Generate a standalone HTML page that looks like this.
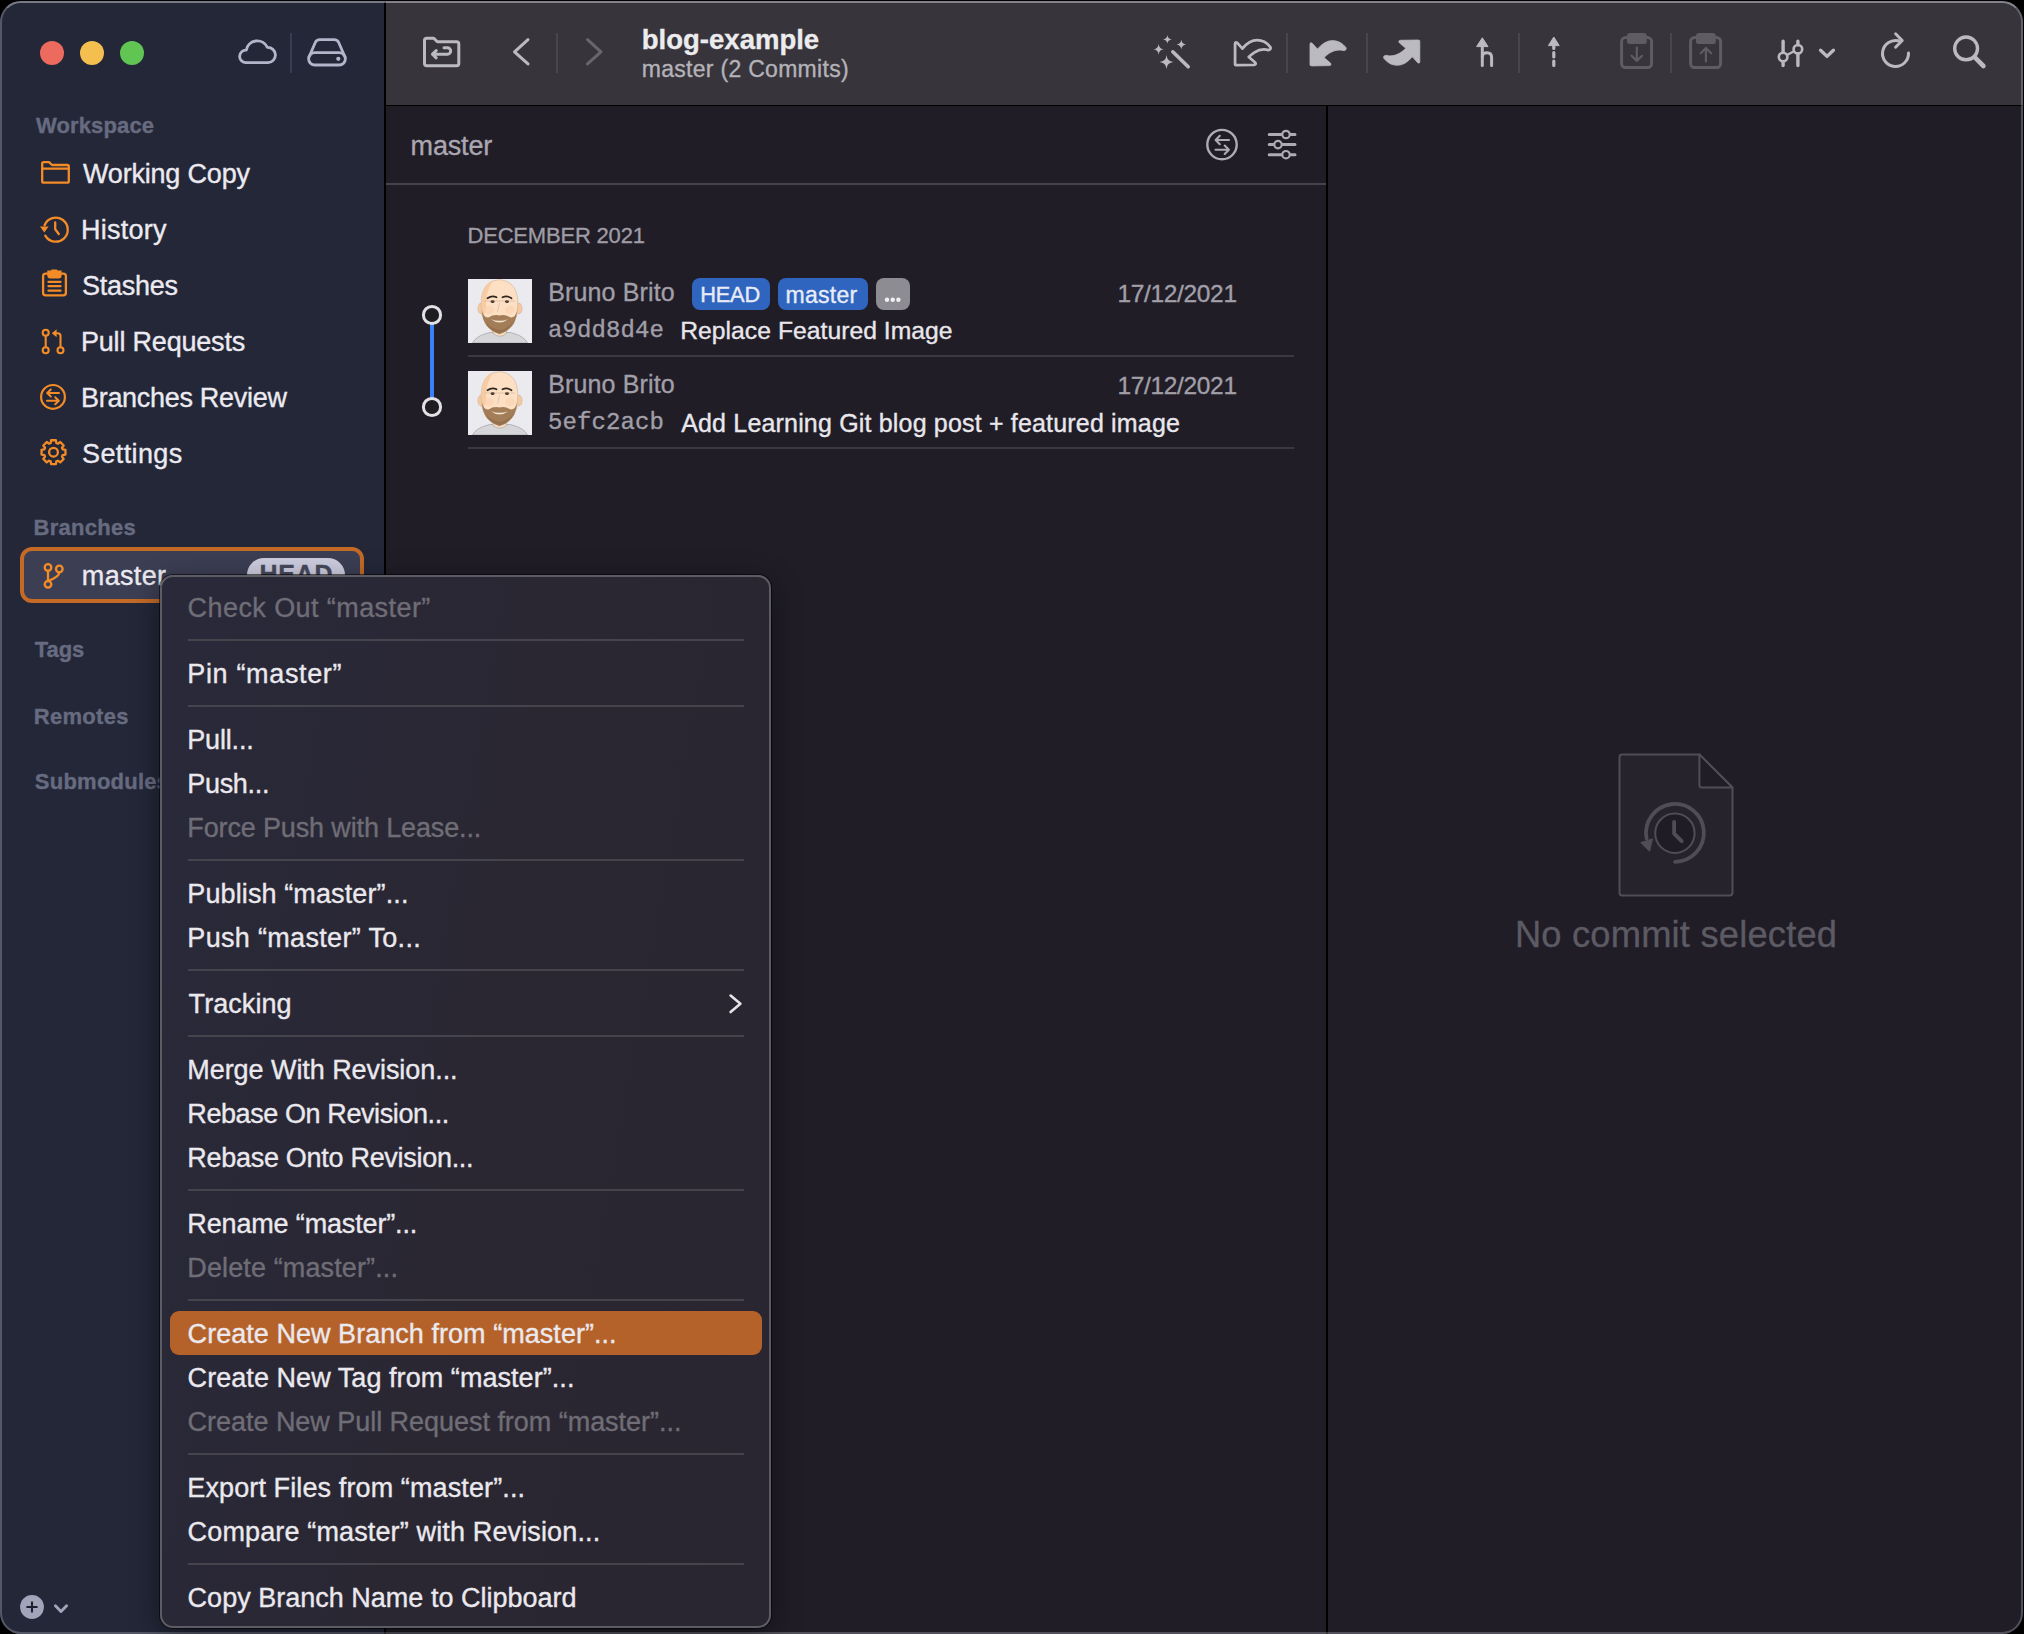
<!DOCTYPE html>
<html><head><meta charset="utf-8">
<style>
*{margin:0;padding:0;box-sizing:border-box}
html,body{width:2024px;height:1634px;overflow:hidden;background:#000}
body{position:relative;font-family:"Liberation Sans",sans-serif}
.t,.mi{-webkit-text-stroke:0.35px currentColor}
.win{position:absolute;left:0;top:1px;width:2023px;height:1633px;border-radius:21px;overflow:hidden;background:#201d27}
.side{position:absolute;left:0;top:0;width:384px;height:1633px;background:#232738}
.vdiv{position:absolute;left:384px;top:0;width:2px;height:1633px;background:#000}
.tool{position:absolute;left:386px;top:0;width:1637px;height:104px;background:#37343b}
.tline{position:absolute;left:386px;top:104px;width:1637px;height:1px;background:#000}
.rdiv{position:absolute;left:1326px;top:105px;width:2px;height:1528px;background:#000}
.frame{position:absolute;left:0;top:1px;width:2023px;height:1633px;border-radius:21px;border:2px solid rgba(220,220,230,.27);border-top-color:rgba(225,225,235,.45);pointer-events:none}
.t{position:absolute;white-space:nowrap;line-height:1;margin-top:1.8px}
.hdrline{position:absolute;left:386px;top:182px;width:940px;height:2px;background:#46434d}
.sep{position:absolute;height:2px;background:#3f3d47}
svg.ov{position:absolute;left:0;top:0}
.menu{position:absolute;left:160px;top:575px;width:611px;height:1053px;border-radius:13px;
 background:linear-gradient(100deg,#29293a 0%,#2a2732 55%,#2a2631 100%);
 border:2px solid #5d5b63;box-shadow:0 0 0 1px rgba(0,0,0,.55), 0 8px 30px rgba(0,0,0,.45)}
.mi{position:absolute;left:188px;margin-top:1px;font-size:27px;color:#ebe9ee;white-space:nowrap;line-height:1}
.mi.dis{color:#6f6d76}
.msep{position:absolute;left:188px;width:556px;height:2px;background:#45434c}
.hl{position:absolute;left:170px;top:1311px;width:592px;height:44px;border-radius:9px;background:#b5622a}
</style></head><body>
<div class="win">
 <div class="side"></div>
 <div class="vdiv"></div>
 <div class="tool"></div>
 <div class="tline"></div>
 <div class="hdrline"></div>
 <div class="rdiv"></div>
</div>

<!-- SIDEBAR TEXT -->

<div style="position:absolute;left:20px;top:547px;width:344px;height:56px;border-radius:12px;border:4px solid #c46a26;background:#3c3e54"></div>
<div style="position:absolute;left:247px;top:558px;width:98px;height:34px;border-radius:17px;background:#cdcde0;overflow:hidden"><div class="t" style="left:12.5px;top:2.7px;font-size:25px;font-weight:bold;letter-spacing:0.73px;color:#464a5e">HEAD</div></div>


<!-- TOOLBAR TEXT -->

<!-- LIST -->

<div class="sep" style="left:468px;top:355px;width:826px;background:#3a3842"></div>

<div class="sep" style="left:468px;top:447px;width:826px;background:#3a3842"></div>

<div style="position:absolute;left:692px;top:278px;width:78px;height:32px;border-radius:8px;background:#2f64bf"></div>
<div style="position:absolute;left:778px;top:278px;width:90px;height:32px;border-radius:8px;background:#2f64bf"></div>
<div style="position:absolute;left:876px;top:278px;width:34px;height:32px;border-radius:8px;background:#8d8c92"></div>
<svg class="ov" width="2024" height="400"><circle cx="887" cy="299.8" r="2.2" fill="#f0f0f2"/><circle cx="892.7" cy="299.8" r="2.2" fill="#f0f0f2"/><circle cx="898.4" cy="299.8" r="2.2" fill="#f0f0f2"/></svg>

<!-- RIGHT PANE -->

<!-- TEXT -->
<div class="t" style="left:36.0px;top:113.5px;font-size:22px;font-weight:bold;letter-spacing:0.125px;color:#676b80">Workspace</div>
<div class="t" style="left:83.0px;top:159.4px;font-size:27px;letter-spacing:-0.191px;color:#eceaf0">Working Copy</div>
<div class="t" style="left:81.0px;top:215.0px;font-size:27px;letter-spacing:0.250px;color:#eceaf0">History</div>
<div class="t" style="left:82.0px;top:271.1px;font-size:27px;letter-spacing:-0.267px;color:#eceaf0">Stashes</div>
<div class="t" style="left:81.0px;top:327.5px;font-size:27px;letter-spacing:-0.200px;color:#eceaf0">Pull Requests</div>
<div class="t" style="left:81.0px;top:383.3px;font-size:27px;letter-spacing:-0.300px;color:#eceaf0">Branches Review</div>
<div class="t" style="left:82.0px;top:439.3px;font-size:27px;letter-spacing:0.371px;color:#eceaf0">Settings</div>
<div class="t" style="left:33.6px;top:515.1px;font-size:22px;font-weight:bold;letter-spacing:0.257px;color:#676b80">Branches</div>
<div class="t" style="left:81.8px;top:561.4px;font-size:27px;letter-spacing:0.340px;color:#eceaf0">master</div>
<div class="t" style="left:34.8px;top:637.7px;font-size:22px;font-weight:bold;letter-spacing:-0.067px;color:#676b80">Tags</div>
<div class="t" style="left:33.8px;top:703.9px;font-size:22px;font-weight:bold;letter-spacing:0.283px;color:#676b80">Remotes</div>
<div class="t" style="left:34.8px;top:769.1px;font-size:22px;font-weight:bold;letter-spacing:0.250px;color:#676b80">Submodules</div>
<div class="t" style="left:641.8px;top:24.7px;font-size:27.5px;font-weight:bold;letter-spacing:0.009px;color:#ecebee">blog-example</div>
<div class="t" style="left:641.8px;top:56.1px;font-size:23px;letter-spacing:0.288px;color:#b4b2b8">master (2 Commits)</div>
<div class="t" style="left:410.6px;top:131.3px;font-size:27px;letter-spacing:-0.160px;color:#aaa7b1">master</div>
<div class="t" style="left:467.5px;top:223.7px;font-size:22px;letter-spacing:-0.192px;color:#9f9ca5">DECEMBER 2021</div>
<div class="t" style="left:548.3px;top:278.7px;font-size:25px;letter-spacing:0.130px;color:#a19fa7">Bruno Brito</div>
<div class="t" style="left:1117.4px;top:280.3px;font-size:24.5px;letter-spacing:-0.333px;color:#a19fa7">17/12/2021</div>
<div class="t" style="left:548.0px;top:317.7px;font-size:24px;font-family:'Liberation Mono',monospace;letter-spacing:0.100px;color:#a19fa7">a9dd8d4e</div>
<div class="t" style="left:680.2px;top:316.9px;font-size:24.7px;letter-spacing:0.033px;color:#e9e7ec">Replace Featured Image</div>
<div class="t" style="left:548.3px;top:370.7px;font-size:25px;letter-spacing:0.130px;color:#a19fa7">Bruno Brito</div>
<div class="t" style="left:1117.4px;top:372.2px;font-size:24.5px;letter-spacing:-0.333px;color:#a19fa7">17/12/2021</div>
<div class="t" style="left:548.0px;top:409.7px;font-size:24px;font-family:'Liberation Mono',monospace;letter-spacing:0.100px;color:#a19fa7">5efc2acb</div>
<div class="t" style="left:681.2px;top:408.8px;font-size:25px;letter-spacing:0.176px;color:#e9e7ec">Add Learning Git blog post + featured image</div>
<div class="t" style="left:700.2px;top:282.6px;font-size:21.8px;letter-spacing:-0.200px;color:#e8ecf6">HEAD</div>
<div class="t" style="left:785.6px;top:281.9px;font-size:23px;letter-spacing:0.260px;color:#e8ecf6">master</div>
<div class="t" style="left:1514.9px;top:915.1px;font-size:36.3px;letter-spacing:0.200px;color:#5c5a63">No commit selected</div>
<svg class="ov" width="2024" height="1634" viewBox="0 0 2024 1634">
 <defs>
 <symbol id="av" viewBox="0 0 64 64">
  <rect width="64" height="64" fill="#ebebef"/>
  <path d="M4.5,64 Q8,56.5 22,53.5 H42 Q56,56.5 59.5,64 Z" fill="#d6d6d9" stroke="#9ea1a8" stroke-width="0.7"/>
  <path d="M25,46 V54.5 Q31.7,60 38.5,54.5 V46 Z" fill="#f9dcc0" stroke="#9ea1a8" stroke-width="0.6"/>
  <ellipse cx="13" cy="29.5" rx="3.2" ry="5.4" fill="#f3c9a3" stroke="#c9a586" stroke-width="0.4"/>
  <ellipse cx="51" cy="29.5" rx="3.2" ry="5.4" fill="#f3c9a3" stroke="#c9a586" stroke-width="0.4"/>
  <path d="M13.2,26 Q12.5,2.5 31.5,0.6 Q50.5,2.5 49.8,26 Q50,50 31.5,55 Q13,50 13.2,26 Z" fill="#fde0c4" stroke="#c9a586" stroke-width="0.5"/>
  <path d="M25,1.3 Q13.5,5 13.3,26 Q14,34 15.5,38 L18,30 Q17,14 25,1.3 Z" fill="#f6c89e" opacity="0.85"/>
  <ellipse cx="21" cy="31" rx="5" ry="4" fill="#fad2b2" opacity="0.7"/>
  <ellipse cx="42" cy="31" rx="5" ry="4" fill="#fad2b2" opacity="0.7"/>
  <path d="M13.8,31 Q14.5,50 31.5,55 Q48.5,50 49.2,31 Q47.5,39 42.5,38.5 Q37,35 31.5,36.5 Q26,35 20.5,38.5 Q15.5,39 13.8,31 Z" fill="#a27d58"/>
  <path d="M17,42 Q22,52 31.5,54 Q41,52 46,42 Q40,50 31.5,51 Q23,50 17,42 Z" fill="#8f6b4a" opacity="0.7"/>
  <path d="M23,40.2 Q31.5,47 40,40.2 Q31.5,43.2 23,40.2 Z" fill="#f4e1cc"/>
  <path d="M19.5,19.3 Q24,16 28.5,18.3 M34.5,18.3 Q39,16 43.5,19.3" stroke="#2f2520" stroke-width="1.7" fill="none" stroke-linecap="round"/>
  <ellipse cx="24.6" cy="22.6" rx="2.1" ry="1.3" fill="#2f2520"/>
  <ellipse cx="39" cy="22.6" rx="2.1" ry="1.3" fill="#2f2520"/>
  <path d="M16.5,22 H47 M31.5,24 Q30,31 29.5,33" stroke="#c3a489" stroke-width="0.45" fill="none"/>
 </symbol>
 </defs>
 <use href="#av" x="468" y="279" width="64" height="64"/>
 <use href="#av" x="468" y="371" width="64" height="64"/>

 <!-- traffic lights -->
 <circle cx="52" cy="53" r="12" fill="#ec6a5e"/>
 <circle cx="92" cy="53" r="12" fill="#f4bf4f"/>
 <circle cx="132" cy="53" r="12" fill="#61c554"/>
 <!-- cloud / drive -->
 <g fill="none" stroke="#b3b6ca" stroke-width="2.8" stroke-linejoin="round" stroke-linecap="round">
  <path d="M245.5,62.6 H268.2 A7.6,7.6 0 0 0 267.4,47.4 A11.2,11.2 0 0 0 246.2,50.2 A6.2,6.2 0 0 0 245.5,62.6 Z"/>
  <path d="M309,57 L315.3,42.5 Q316.6,39.6 319.8,39.6 H334.2 Q337.4,39.6 338.7,42.5 L345,57"/>
  <rect x="308.6" y="52.6" width="36.8" height="12.4" rx="6.2"/>
 </g>
 <circle cx="338.3" cy="58.8" r="2.1" fill="#b3b6ca"/>
 <rect x="290" y="33" width="2" height="40" fill="#383c50"/>

 <!-- sidebar icons -->
 <g fill="none" stroke="#f38b26" stroke-width="2.3" stroke-linejoin="round" stroke-linecap="round">
  <path d="M42.2,181.2 V163.6 Q42.2,162.1 43.7,162.1 H49 L52,165 H67.3 Q68.8,165 68.8,166.5 V181.2 Q68.8,182.7 67.3,182.7 H43.7 Q42.2,182.7 42.2,181.2 Z"/>
  <path d="M42.2,168.7 H68.8"/>
  <path d="M44.6,225.2 A12,12 0 1 1 45.3,235.6"/>
  <path d="M55.2,222.5 V229.3 L58.8,234"/>
  <rect x="43.1" y="273.6" width="22.8" height="21.8" rx="2.6"/>
  <path d="M48.5,281.8 H60.5 M48.5,286.2 H60.5 M48.5,290.7 H60.5"/>
  <!-- pull request -->
  <circle cx="45.7" cy="332.8" r="3.0" stroke-width="2.1"/>
  <circle cx="45.7" cy="350.2" r="3.0" stroke-width="2.1"/>
  <circle cx="60.5" cy="350.2" r="3.0" stroke-width="2.1"/>
  <path stroke-width="2.1" d="M45.7,335.8 V347.2 M60.5,347.2 V336 Q60.5,333.2 57.8,333.2 H55"/>
  <!-- branches review -->
  <circle cx="53" cy="396.9" r="11.9" stroke-width="2.2"/>
  <path stroke-width="2" d="M47.4,393 H59 M50.8,389.5 L47.2,393 L50.8,396.5 M47,400.8 H58.6 M55.2,397.3 L58.8,400.8 L55.2,404.3"/>
  <!-- gear -->
  <circle cx="53.5" cy="452.2" r="4.4"/>
  <path d="M50.66,443.03 L51.08,440.24 L55.92,440.24 L56.34,443.03 L57.98,443.71 L60.24,442.03 L63.67,445.46 L61.99,447.72 L62.67,449.36 L65.46,449.78 L65.46,454.62 L62.67,455.04 L61.99,456.68 L63.67,458.94 L60.24,462.37 L57.98,460.69 L56.34,461.37 L55.92,464.16 L51.08,464.16 L50.66,461.37 L49.02,460.69 L46.76,462.37 L43.33,458.94 L45.01,456.68 L44.33,455.04 L41.54,454.62 L41.54,449.78 L44.33,449.36 L45.01,447.72 L43.33,445.46 L46.76,442.03 L49.02,443.71 Z"/>
  <!-- branch -->
  <circle cx="48" cy="567.5" r="3.3"/>
  <circle cx="48" cy="584.3" r="3.3"/>
  <circle cx="59.3" cy="569" r="3.3"/>
  <path d="M48,570.8 V581 M59.3,572.3 Q59.3,577 48,581"/>
 </g>
 <path d="M51.8,333.2 L56.6,329.2 V337.2 Z" fill="#f38b26"/>
 <path d="M40,226.6 H48.6 L44.3,232.6 Z" fill="#f38b26"/>
 <path d="M47.3,270.4 H61.6 V276 Q61.6,278.4 59.2,278.4 H49.7 Q47.3,278.4 47.3,276 Z" fill="#f38b26"/>
 <rect x="51" y="269.5" width="6.5" height="3" rx="1" fill="#f38b26"/>

 <!-- toolbar -->
 <g fill="none" stroke="#bcbac1" stroke-width="3" stroke-linejoin="round" stroke-linecap="round">
  <path d="M424.5,63.5 V40.5 Q424.5,38.3 426.7,38.3 H433.8 L437.3,41.8 H456.6 Q458.8,41.8 458.8,44 V63.5 Q458.8,65.7 456.6,65.7 H426.7 Q424.5,65.7 424.5,63.5 Z"/>
  <path d="M432.5,54.2 H447.5 A3.2,3.2 0 0 0 447.5,47.8 H444 M436.2,50.6 L432.5,54.2 L436.2,57.8"/>
  <path d="M528,39.7 L514.5,51.8 L528,63.9"/>
 </g>
 <path d="M587.5,39.7 L601,51.8 L587.5,63.9" fill="none" stroke="#68666d" stroke-width="3" stroke-linecap="round" stroke-linejoin="round"/>
 <rect x="556" y="33" width="2" height="40" fill="#48454d"/>

 <!-- wand -->
 <g fill="#bcbac1"><path d="M1167.4,35.00 Q1167.75,39.05 1171.80,39.4 Q1167.75,39.75 1167.4,43.80 Q1167.05,39.75 1163.00,39.4 Q1167.05,39.05 1167.4,35.00 Z"/><path d="M1181.3,39.50 Q1181.69,44.01 1186.20,44.4 Q1181.69,44.79 1181.3,49.30 Q1180.91,44.79 1176.40,44.4 Q1180.91,44.01 1181.3,39.50 Z"/><path d="M1158.6,43.90 Q1159.03,48.87 1164.00,49.3 Q1159.03,49.73 1158.6,54.70 Q1158.17,49.73 1153.20,49.3 Q1158.17,48.87 1158.6,43.90 Z"/><path d="M1166.5,54.90 Q1167.06,61.34 1173.50,61.9 Q1167.06,62.46 1166.5,68.90 Q1165.94,62.46 1159.50,61.9 Q1165.94,61.34 1166.5,54.90 Z"/></g>
 <path d="M1172.8,51.8 L1188.2,66.8" stroke="#bcbac1" stroke-width="3.6" stroke-linecap="round"/>
 <!-- arrows -->
 <path transform="translate(1233.6,39.2) scale(0.98,0.99)" d="M1.5,25.5 L1.5,4.5 Q1.5,2.5 3.5,3.5 L9,9.5 Q16,1 24,1 Q32,1 37.5,8 Q38.5,10.5 35.5,11 Q28,9 21,13.5 Q18,15.5 15.5,18 L22,23.5 Q23.5,25.5 21,26 L3.5,26.3 Q1.5,26.3 1.5,25.5 Z" fill="none" stroke="#bcbac1" stroke-width="2.8" stroke-linejoin="round"/>
 <rect x="1286" y="33" width="2" height="40" fill="#48454d"/>
 <path transform="translate(1308.5,39.6)" d="M1.5,25.5 L1.5,4.5 Q1.5,2.5 3.5,3.5 L9,9.5 Q16,1 24,1 Q32,1 37.5,8 Q38.5,10.5 35.5,11 Q28,9 21,13.5 Q18,15.5 15.5,18 L22,23.5 Q23.5,25.5 21,26 L3.5,26.3 Q1.5,26.3 1.5,25.5 Z" fill="#bcbac1" stroke="#bcbac1" stroke-width="0.8" stroke-linejoin="round"/>
 <rect x="1366" y="33" width="2" height="40" fill="#48454d"/>
 <path transform="translate(1421.3,66.3) rotate(180)" d="M1.5,25.5 L1.5,4.5 Q1.5,2.5 3.5,3.5 L9,9.5 Q16,1 24,1 Q32,1 37.5,8 Q38.5,10.5 35.5,11 Q28,9 21,13.5 Q18,15.5 15.5,18 L22,23.5 Q23.5,25.5 21,26 L3.5,26.3 Q1.5,26.3 1.5,25.5 Z" fill="#bcbac1" stroke="#bcbac1" stroke-width="0.8" stroke-linejoin="round"/>
 <!-- branch up -->
 <g fill="none" stroke="#bcbac1" stroke-width="3" stroke-linecap="round" stroke-linejoin="round">
  <path d="M1482.3,45 V65.5"/>
  <path d="M1482.3,56.5 Q1482.8,52.8 1487,52.8 Q1491.6,52.8 1491.6,57.5 V65.5"/>
 </g>
 <path d="M1482.3,37.8 L1488,46.6 H1476.6 Z" fill="#bcbac1" stroke="#bcbac1" stroke-width="1" stroke-linejoin="round"/>
 <rect x="1518" y="33" width="2" height="40" fill="#48454d"/>
 <!-- dashed up -->
 <path d="M1553.8,37 L1559.2,45.6 H1548.4 Z" fill="#bcbac1" stroke="#bcbac1" stroke-width="1" stroke-linejoin="round"/>
 <path d="M1553.8,46 V48.5 M1553.8,52.5 V57 M1553.8,61 V65.5" stroke="#bcbac1" stroke-width="3.2" stroke-linecap="round"/>
 <!-- clipboards -->
 <g fill="none" stroke="#5f5c64" stroke-width="3" stroke-linecap="round" stroke-linejoin="round">
  <rect x="1621.6" y="37.6" width="30" height="30" rx="4"/>
  <path d="M1636.8,47.5 V61 M1631.6,55.8 L1636.8,61 L1642,55.8" stroke-width="2.2"/>
  <rect x="1690.6" y="37.6" width="30" height="30" rx="4"/>
  <path d="M1705.9,61.5 V48 M1700.7,53.2 L1705.9,48 L1711.1,53.2" stroke-width="2.2"/>
 </g>
 <g fill="#5f5c64">
  <path d="M1627,35.5 Q1627,33 1630,33 H1643.5 Q1646.8,33 1646.8,35.5 V41.5 Q1646.8,44 1644.3,44 H1629.5 Q1627,44 1627,41.5 Z"/>
  <path d="M1696,35.5 Q1696,33 1699,33 H1712.5 Q1715.8,33 1715.8,35.5 V41.5 Q1715.8,44 1713.3,44 H1698.5 Q1696,44 1696,41.5 Z"/>
 </g>
 <rect x="1670" y="33" width="2" height="40" fill="#48454d"/>
 <!-- sliders -->
 <g fill="none" stroke="#bcbac1" stroke-linecap="round">
  <path d="M1783.1,41.2 V52.4 M1783.1,61.6 V65.6 M1797.9,41.2 V44.8 M1797.9,53.8 V65.6" stroke-width="3.4"/>
  <circle cx="1783.1" cy="57" r="4.3" stroke-width="2.6"/>
  <circle cx="1797.9" cy="49.3" r="4.3" stroke-width="2.6"/>
  <path d="M1787,55 L1794,51.3" stroke-width="2.4"/>
  <path d="M1820.6,50.2 L1827,56.4 L1833.4,50.2" stroke-width="3.4" stroke-linejoin="round"/>
 </g>
 <!-- refresh -->
 <g fill="none" stroke="#bcbac1" stroke-width="3" stroke-linecap="round" stroke-linejoin="round">
  <path d="M1908.5,53 A13,13 0 1 1 1898.5,40.8"/>
  <path d="M1895.6,33.8 L1902.2,40.5 L1895.6,47.2"/>
  <circle cx="1966.1" cy="48.4" r="11.4" stroke-width="3.4"/>
  <path d="M1974.6,57.2 L1983.4,66" stroke-width="4.6"/>
 </g>
 <!-- list header icons -->
 <g fill="none" stroke="#aeabb5" stroke-width="2.4" stroke-linecap="round" stroke-linejoin="round">
  <circle cx="1222" cy="144.6" r="14.7"/>
  <path stroke-width="2.1" d="M1229,140 H1215.7 M1219.8,135.8 L1215.6,140 L1219.8,144.2 M1215.5,149.8 H1228.8 M1224.7,145.6 L1228.9,149.8 L1224.7,154"/>
  <path d="M1269.2,134.5 H1295 M1269.2,144.6 H1295 M1269.2,154.7 H1295" stroke-width="3"/>
  <circle cx="1286" cy="134.5" r="3.7" stroke-width="2.2" fill="#201d27"/>
  <circle cx="1278" cy="144.6" r="3.7" stroke-width="2.2" fill="#201d27"/>
  <circle cx="1286" cy="154.7" r="3.7" stroke-width="2.2" fill="#201d27"/>
 </g>
 <!-- graph -->
 <path d="M432,322 V400" stroke="#3a82f7" stroke-width="4"/>
 <circle cx="432" cy="315" r="8.6" fill="#1e1d22" stroke="#e2e1e5" stroke-width="3"/>
 <circle cx="432" cy="407" r="8.6" fill="#1e1d22" stroke="#e2e1e5" stroke-width="3"/>
 <!-- doc icon -->
 <path d="M1622,754.4 H1699.4 L1732.5,787.5 V892.5 Q1732.5,895.5 1729.5,895.5 H1622 Q1619.5,895.5 1619.5,892.5 V757.4 Q1619.5,754.4 1622,754.4 Z" fill="#26232d" stroke="#4f4d55" stroke-width="2"/>
 <path d="M1699.4,754.4 V785 Q1699.4,787.5 1702,787.5 H1732.5 Z" fill="#201d27" stroke="#4f4d55" stroke-width="2" stroke-linejoin="round"/>
 <circle cx="1674.9" cy="833.2" r="19.7" fill="#1f1c25" stroke="#4f4d55" stroke-width="2"/>
 <path d="M1675.1,861.8 A28.9,28.9 0 1 0 1646.6,838.5" fill="none" stroke="#4f4d55" stroke-width="3.8" stroke-linecap="round"/>
 <path d="M1640.6,842.6 L1652.6,838.8 L1649.6,851.4 Z" fill="#4f4d55" stroke="#4f4d55" stroke-width="0.8" stroke-linejoin="round"/>
 <path d="M1674.1,822 V833.6 L1681.7,841.2" fill="none" stroke="#4f4d55" stroke-width="3.8" stroke-linecap="round" stroke-linejoin="round"/>
 <!-- bottom plus -->
 <circle cx="32" cy="1607" r="11.9" fill="#a2a4ba"/>
 <path d="M26.4,1607 H37.6 M32,1601.4 V1612.6" stroke="#1e2030" stroke-width="2.1"/>
 <path d="M55.4,1605.8 L61,1611.5 L66.6,1605.8" fill="none" stroke="#a2a4ba" stroke-width="2.9" stroke-linecap="round" stroke-linejoin="round"/>

</svg>

<div class="frame"></div>

<!-- MENU -->
<div class="menu"></div>
<div class="hl"></div>
<div class="mi dis" style="top:594.1px;left:187.6px;letter-spacing:0.420px">Check Out “master”</div>
<div class="msep" style="top:639px"></div>
<div class="mi" style="top:660.1px;left:187.3px;letter-spacing:0.652px">Pin “master”</div>
<div class="msep" style="top:705px"></div>
<div class="mi" style="top:726.1px;left:187.3px;letter-spacing:-0.187px">Pull...</div>
<div class="mi" style="top:770.1px;left:187.3px;letter-spacing:-0.324px">Push...</div>
<div class="mi dis" style="top:814.1px;left:187.3px;letter-spacing:-0.137px">Force Push with Lease...</div>
<div class="msep" style="top:859px"></div>
<div class="mi" style="top:880.1px;left:187.3px;letter-spacing:0.113px">Publish “master”...</div>
<div class="mi" style="top:924.1px;left:187.3px;letter-spacing:0.324px">Push “master” To...</div>
<div class="msep" style="top:969px"></div>
<div class="mi" style="top:990.1px;left:188.6px;letter-spacing:0.070px">Tracking</div>
<div class="msep" style="top:1035px"></div>
<div class="mi" style="top:1056.1px;left:187.3px;letter-spacing:-0.061px">Merge With Revision...</div>
<div class="mi" style="top:1100.1px;left:187.3px;letter-spacing:-0.407px">Rebase On Revision...</div>
<div class="mi" style="top:1144.1px;left:187.3px;letter-spacing:-0.289px">Rebase Onto Revision...</div>
<div class="msep" style="top:1189px"></div>
<div class="mi" style="top:1210.1px;left:187.3px;letter-spacing:-0.150px">Rename “master”...</div>
<div class="mi dis" style="top:1254.1px;left:187.3px;letter-spacing:0.126px">Delete “master”...</div>
<div class="msep" style="top:1299px"></div>
<div class="mi" style="top:1320.1px;left:187.6px;letter-spacing:0.042px">Create New Branch from “master”...</div>
<div class="mi" style="top:1364.1px;left:187.6px;letter-spacing:0.057px">Create New Tag from “master”...</div>
<div class="mi dis" style="top:1408.1px;left:187.6px;letter-spacing:-0.035px">Create New Pull Request from “master”...</div>
<div class="msep" style="top:1453px"></div>
<div class="mi" style="top:1474.1px;left:187.3px;letter-spacing:0.113px">Export Files from “master”...</div>
<div class="mi" style="top:1518.1px;left:187.6px;letter-spacing:0.140px">Compare “master” with Revision...</div>
<div class="msep" style="top:1563px"></div>
<div class="mi" style="top:1584.1px;left:187.6px;letter-spacing:0.012px">Copy Branch Name to Clipboard</div>

<svg class="ov" width="2024" height="1634" viewBox="0 0 2024 1634">
 <path d="M730.6,995.6 L740.4,1003.8 L730.6,1012" fill="none" stroke="#e6e4ea" stroke-width="2.6" stroke-linecap="round" stroke-linejoin="round"/>
</svg>
</body></html>
